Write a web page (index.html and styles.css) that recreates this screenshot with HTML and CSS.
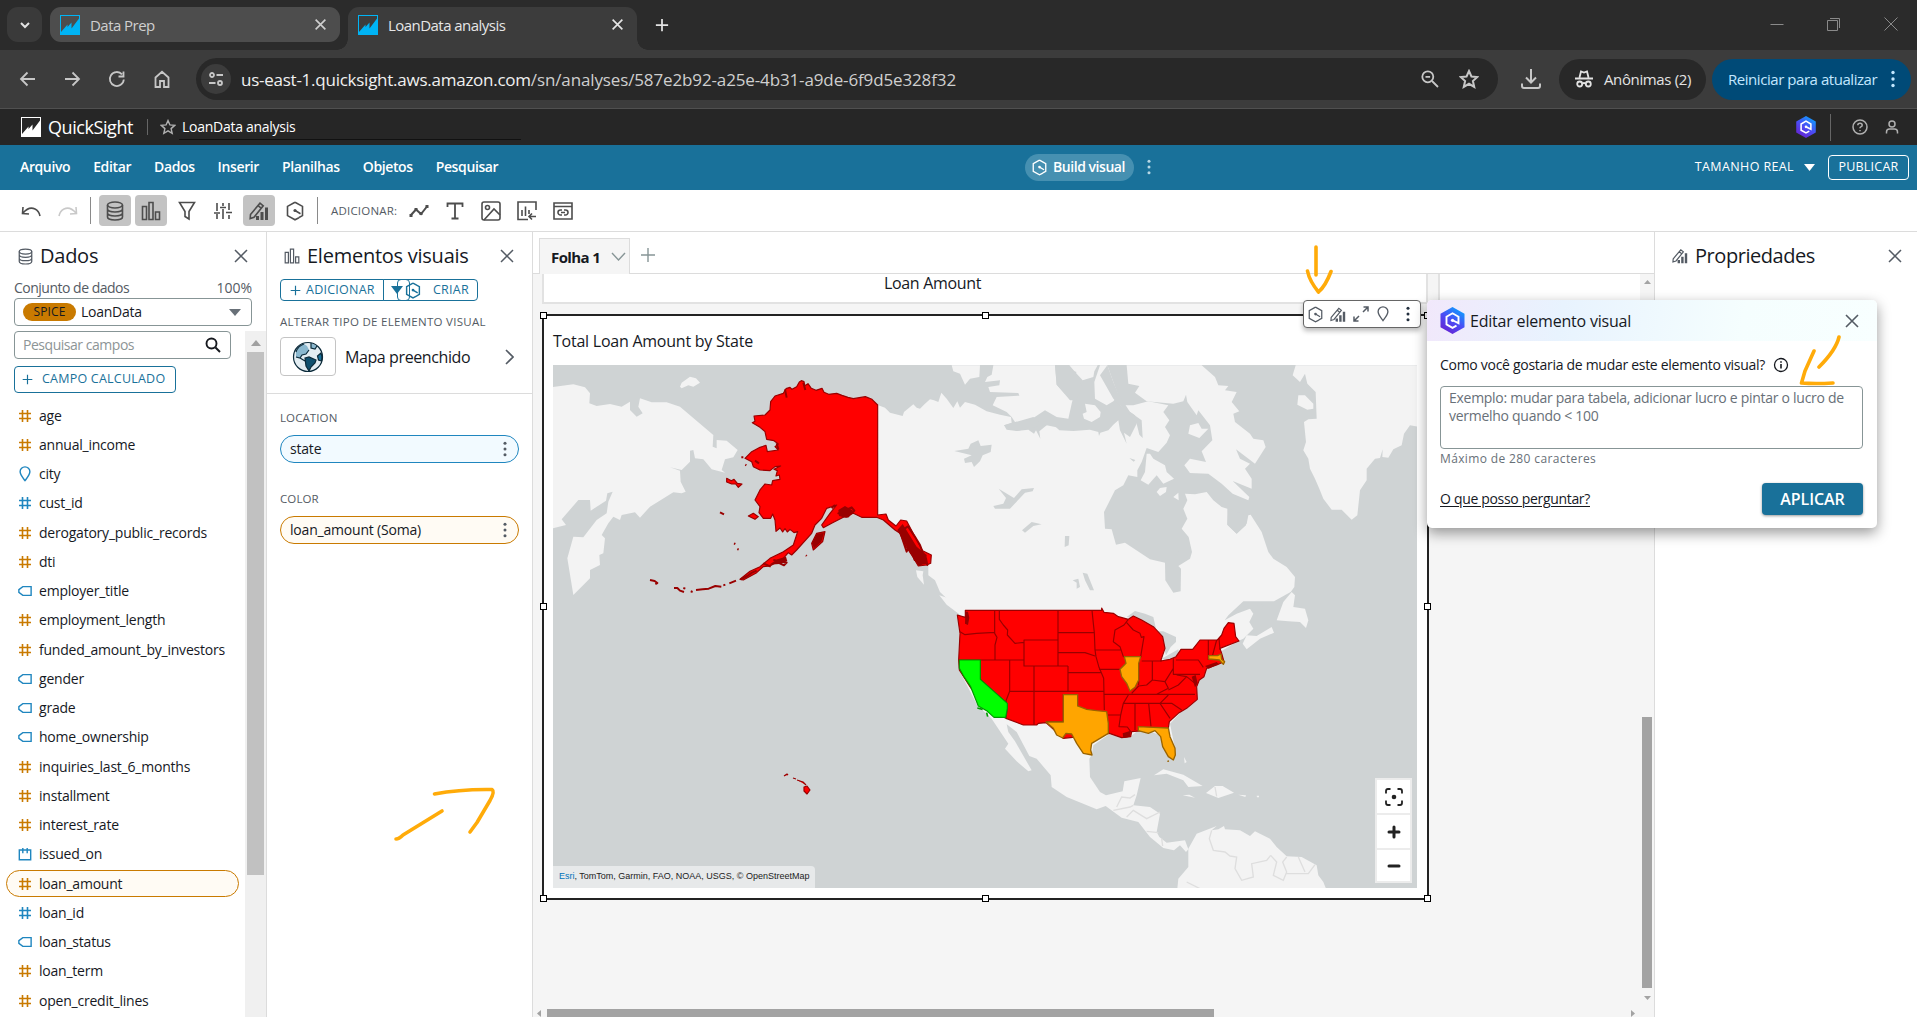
FILE: index.html
```html
<!DOCTYPE html>
<html lang="pt-BR">
<head>
<meta charset="utf-8">
<title>LoanData analysis</title>
<link rel="stylesheet" href="styles.css">
</head>
<body>
<svg class="defs" aria-hidden="true">
  <defs>
    <linearGradient id="qgrad" x1="0.8" y1="0" x2="0.2" y2="1"><stop offset="0" stop-color="#0aa5ff"/><stop offset=".5" stop-color="#4a4df5"/><stop offset="1" stop-color="#6a1fd0"/></linearGradient>
    <symbol id="x" viewBox="0 0 16 16"><path d="M2 2l12 12M14 2L2 14"/></symbol>
    <symbol id="plus" viewBox="0 0 16 16"><path d="M8 1v14M1 8h14"/></symbol>
    <symbol id="favicon" viewBox="0 0 20 20"><rect width="20" height="20" fill="currentColor"/><path class="cut" d="M1 1h18v2.500L11.500 13.500V7.500L7.500 12V9.500L1 17z"/></symbol>
    <symbol id="db" viewBox="0 0 18 20"><ellipse cx="9" cy="4" rx="7.500" ry="3"/><path d="M1.500 4v12c0 1.700 3.400 3 7.500 3s7.500-1.300 7.500-3V4M1.500 8c0 1.700 3.400 3 7.500 3s7.500-1.300 7.500-3M1.500 12c0 1.700 3.400 3 7.500 3s7.500-1.300 7.500-3"/></symbol>
    <symbol id="bars" viewBox="0 0 20 20"><path d="M1.500 5.500h4v13h-4zM8 1.500h4v17H8zM14.500 11h4v7.500h-4z"/></symbol>
    <symbol id="pencil" viewBox="0 0 20 20"><path d="M1.500 13.500L11 2.200l3.200 2.600L5 16.200 1.200 17.500zM9 4.600l3.200 2.600"/><path class="solid" d="M7 15h3v4H7zM11.500 11h3v8h-3zM16 6.500h3V19h-3z"/></symbol>
    <symbol id="hex" viewBox="0 0 18 20"><path d="M9 1.200l7.500 4.200v9.200L13 16.500M13 16.700L9 18.800l-7.500-4.200V5.400L9 1.200M9 9.500l5.500 3.200"/><circle class="solid" cx="9" cy="9.500" r="1.600"/></symbol>
    <symbol id="qlogo" viewBox="0 0 24 27"><path fill="url(#qgrad)" stroke="none" d="M12 0l12 6.700v13.600L12 27 0 20.300V6.700z"/><path d="M16 18.600L12 20.800l-6-3.400V9.800L12 6.300l6 3.500v6.400l-5.500-2.700" fill="none" stroke="#fff" stroke-width="1.900"/><circle cx="12" cy="13.300" r="1.600" fill="#fff"/></symbol>
    <symbol id="pin" viewBox="0 0 14 18"><path d="M7 16.500C4 12.500 1.500 9.500 1.500 6.500a5.500 5.500 0 0 1 11 0C12.500 9.500 10 12.500 7 16.500z"/></symbol>
    <symbol id="hash" viewBox="0 0 14 14"><path d="M4.500 1v12M9.500 1v12M1 4.500h12M1 9.500h12"/></symbol>
    <symbol id="tag" viewBox="0 0 16 12"><path d="M5.500 1H15v10H5.500L1 7.500v-3z"/></symbol>
    <symbol id="cal" viewBox="0 0 16 16"><path d="M1.500 3.500h13v11h-13zM5.500 1v6M10.500 1v6"/></symbol>
    <symbol id="dots" viewBox="0 0 4 18"><circle cx="2" cy="2.500" r="1.700"/><circle cx="2" cy="9" r="1.700"/><circle cx="2" cy="15.500" r="1.700"/></symbol>
    <symbol id="star" viewBox="0 0 18 18"><path d="M9 1.800l2.200 4.900 5.300.5-4 3.600 1.200 5.300L9 13.300l-4.700 2.800 1.200-5.300-4-3.600 5.300-.5z"/></symbol>
  </defs>
</svg>

<header class="tabs">
  <div class="tabs-menu"><svg class="ico" width="10" height="8" viewBox="0 0 10 8"><path stroke-width="2" d="M1 2l4 4 4-4"/></svg></div>
  <div class="tab"><svg class="fav" width="20" height="20"><use href="#favicon"/></svg><span>Data Prep</span><svg class="ico" width="13" height="13"><use href="#x"/></svg></div>
  <div class="tab active"><svg class="fav" width="20" height="20"><use href="#favicon"/></svg><span>LoanData analysis</span><svg class="ico" width="13" height="13"><use href="#x"/></svg></div>
  <svg class="ico newtab" width="14" height="14"><use href="#plus"/></svg>
  <div class="window-controls">
    <svg class="ico" width="14" height="14" viewBox="0 0 14 14"><path d="M.5 7.500h13"/></svg>
    <svg class="ico" width="14" height="14" viewBox="0 0 14 14"><path d="M.5 3.500h10v10H.500zM3 1.500h9.500V11"/></svg>
    <svg class="ico" width="14" height="14" viewBox="0 0 14 14"><path d="M.5.5l13 13M13.500.5l-13 13"/></svg>
  </div>
</header>

<div class="browserbar">
  <div class="navs">
    <svg class="ico" width="18" height="18" viewBox="0 0 18 18"><path d="M17 9H3M9.500 2.500L3 9l6.500 6.500"/></svg>
    <svg class="ico" width="18" height="18" viewBox="0 0 18 18"><path d="M2 9h13.500M9.500 2.500L16 9l-6.500 6.500"/></svg>
    <svg class="ico" width="18" height="18" viewBox="0 0 18 18"><path d="M15.800 9.500A7 7 0 1 1 14 4.300M15.500 1.500v5h-5"/></svg>
    <svg class="ico" width="18" height="18" viewBox="0 0 18 18"><path d="M2.500 7.500L9 1.800l6.500 5.700V17H11v-6H7v6H2.500z"/></svg>
  </div>
  <div class="omnibox">
    <span class="site"><svg class="ico" width="16" height="14" viewBox="0 0 16 14"><circle cx="4" cy="3" r="2"/><path d="M8.500 3H15M1 11h6.500"/><circle cx="12" cy="11" r="2"/></svg></span>
    <span class="url">us-east-1.quicksight.aws.amazon.com<i>/sn/analyses/587e2b92-a25e-4b31-a9de-6f9d5e328f32</i></span>
    <svg class="ico" width="18" height="18" viewBox="0 0 18 18"><circle cx="6.800" cy="6.800" r="5.500"/><path d="M11 11l6 6M4.500 6.800h4.600"/></svg>
    <svg class="ico" width="20" height="20"><use href="#star"/></svg>
  </div>
  <svg class="ico download" width="20" height="20" viewBox="0 0 20 20"><path stroke-width="2" d="M10 0v13M5 8.500l5 5 5-5M1 14.500V17q0 2 2 2h14q2 0 2-2v-2.500"/></svg>
  <div class="incognito"><svg class="ico" width="18" height="18" viewBox="0 0 18 18"><path d="M4.500 7.500L6 1.500l3 1 3-1 1.500 6M0 8.500h18M7.500 13.500q1.500-1 3 0"/><circle cx="4.700" cy="14" r="2.500"/><circle cx="13.300" cy="14" r="2.500"/></svg>Anônimas (2)</div>
  <div class="restart">Reiniciar para atualizar<svg width="4" height="18" fill="currentColor"><use href="#dots"/></svg></div>
</div>

<div class="apphead">
  <svg class="fav" width="20" height="20"><use href="#favicon"/></svg>
  <span class="brand">QuickSight</span>
  <i class="bsep"></i>
  <svg class="ico star" width="16" height="16"><use href="#star"/></svg>
  <span class="docname">LoanData analysis</span>
  <div class="headicons">
    <svg width="20" height="22"><use href="#qlogo"/></svg><i></i>
    <svg class="ico" width="16" height="16" viewBox="0 0 16 16"><circle cx="8" cy="8" r="7"/><path d="M5.800 6.300q0-2 2.200-2t2.200 1.900q0 1.200-1.400 1.700-.8.300-.8 1.300M8 11v1.300"/></svg>
    <svg class="ico" width="14" height="16" viewBox="0 0 14 16"><circle cx="7" cy="5" r="3"/><path d="M1.500 14.500v-1.500q0-3 3-3h5q3 0 3 3v1.500"/></svg>
  </div>
</div>

<nav class="menubar">
  <span>Arquivo</span><span>Editar</span><span>Dados</span><span>Inserir</span><span>Planilhas</span><span>Objetos</span><span>Pesquisar</span>
  <div class="build"><svg class="ico" width="15" height="17"><use href="#hex"/></svg>Build visual</div>
  <svg class="bdots" width="4" height="16" fill="#b9d8e5"><use href="#dots"/></svg>
  <div class="zoomsel">TAMANHO REAL<svg width="11" height="7"><path d="M0 0h11L5.500 7z" fill="#fff"/></svg></div>
  <div class="publish">PUBLICAR</div>
</nav>

<div class="toolbar">
  <svg class="ico" width="20" height="16" viewBox="0 0 20 16"><path d="M2 4l-.5 6.500 6.500.5M2 10Q8 3 14 6q4 2 5 7"/></svg>
  <svg class="ico dim" width="20" height="16" viewBox="0 0 20 16"><path d="M18 4l.5 6.500-6.500.5M18 10Q12 3 6 6q-4 2-5 7"/></svg>
  <i class="sep"></i>
  <span class="tb on"><svg class="ico" width="18" height="20"><use href="#db"/></svg></span>
  <span class="tb on"><svg class="ico" width="20" height="20"><use href="#bars"/></svg></span>
  <span class="tb"><svg class="ico" width="18" height="20" viewBox="0 0 18 20"><path d="M1.500 1.500h15l-5.500 9V18l-4-2.500v-5z"/></svg></span>
  <span class="tb"><svg class="ico" width="20" height="18" viewBox="0 0 20 18"><path d="M4 1v8M4 12v5M10 1v3M10 7v10M16 1v7M16 13v4M1 11h6M7 5.500h6M13 10.500h6"/></svg></span>
  <span class="tb on"><svg class="ico" width="20" height="20"><use href="#pencil"/></svg></span>
  <span class="tb"><svg class="ico" width="18" height="20"><use href="#hex"/></svg></span>
  <i class="sep"></i>
  <span class="addlabel">ADICIONAR:</span>
  <span class="tb"><svg class="ico" width="20" height="14" viewBox="0 0 20 14"><path stroke-width="2" d="M2 11l5-5.500 5 4.500 6-7.500"/><path class="solid" d="M.5 10h3v3h-3zM5.500 4h3v3h-3zM10.500 8h3v3h-3zM16.500 1h3v3h-3z"/></svg></span>
  <span class="tb"><svg class="ico" width="18" height="18" viewBox="0 0 18 18"><path stroke-width="1.800" d="M1.500 5V1.500h15V5M9 1.500v15M5.500 16.500h7"/></svg></span>
  <span class="tb"><svg class="ico" width="20" height="20" viewBox="0 0 20 20"><rect x="1" y="1" width="18" height="18" rx="2"/><circle cx="6.500" cy="6.500" r="2"/><path d="M3 19l10-11 6 6"/></svg></span>
  <span class="tb"><svg class="ico" width="20" height="20" viewBox="0 0 20 20"><path d="M11 18.500H1V1h18v8M5 9v6M8.500 5.500V15M12 9v4M19 15.500h-6.500M15 12.500l-3 3 3 3"/></svg></span>
  <span class="tb"><svg class="ico" width="20" height="18" viewBox="0 0 20 18"><path d="M1 1h18v16H1zM1 4.500h18M9 8H7.500a2.500 2.500 0 0 0 0 5H9M11 8h1.500a2.500 2.500 0 0 1 0 5H11M8 10.500h4"/></svg></span>
</div>

<main class="work">
  <section class="data">
    <div class="ptitle"><svg class="ico" width="15" height="17"><use href="#db"/></svg><h2>Dados</h2><svg class="ico" width="16" height="16"><use href="#x"/></svg></div>
    <div class="dsrow"><span>Conjunto de dados</span><span class="pct">100%</span></div>
    <div class="dssel"><b>SPICE</b><span>LoanData</span><svg width="12" height="7"><path d="M0 0h12L6 7z" fill="#687078"/></svg></div>
    <div class="scrollwrap">
      <div class="fields">
        <div class="search">Pesquisar campos<svg class="ico" width="16" height="16" viewBox="0 0 16 16"><circle cx="6.500" cy="6.500" r="5"/><path d="M10.500 10.500l4.500 4.500"/></svg></div>
        <div class="calc"><svg class="ico" width="11" height="11"><use href="#plus"/></svg>CAMPO CALCULADO</div>
        <ul>
          <li class="m"><svg><use href="#hash"/></svg>age</li>
          <li class="m"><svg><use href="#hash"/></svg>annual_income</li>
          <li class="d"><svg class="pinico"><use href="#pin"/></svg>city</li>
          <li class="d"><svg><use href="#hash"/></svg>cust_id</li>
          <li class="m"><svg><use href="#hash"/></svg>derogatory_public_records</li>
          <li class="m"><svg><use href="#hash"/></svg>dti</li>
          <li class="d"><svg><use href="#tag"/></svg>employer_title</li>
          <li class="m"><svg><use href="#hash"/></svg>employment_length</li>
          <li class="m"><svg><use href="#hash"/></svg>funded_amount_by_investors</li>
          <li class="d"><svg><use href="#tag"/></svg>gender</li>
          <li class="d"><svg><use href="#tag"/></svg>grade</li>
          <li class="d"><svg><use href="#tag"/></svg>home_ownership</li>
          <li class="m"><svg><use href="#hash"/></svg>inquiries_last_6_months</li>
          <li class="m"><svg><use href="#hash"/></svg>installment</li>
          <li class="m"><svg><use href="#hash"/></svg>interest_rate</li>
          <li class="d"><svg><use href="#cal"/></svg>issued_on</li>
          <li class="m sel"><svg><use href="#hash"/></svg>loan_amount</li>
          <li class="d"><svg><use href="#hash"/></svg>loan_id</li>
          <li class="d"><svg><use href="#tag"/></svg>loan_status</li>
          <li class="m"><svg><use href="#hash"/></svg>loan_term</li>
          <li class="m"><svg><use href="#hash"/></svg>open_credit_lines</li>
        </ul>
      </div>
      <div class="vbar"><svg width="10" height="6"><path d="M0 6h10L5 0z" fill="#a0a0a0"/></svg><div></div></div>
    </div>
  </section>

  <section class="visuals">
    <div class="ptitle"><svg class="ico" width="16" height="16"><use href="#bars"/></svg><h2>Elementos visuais</h2><svg class="ico" width="16" height="16"><use href="#x"/></svg></div>
    <div class="addrow">
      <div class="add"><svg class="ico" width="11" height="11"><use href="#plus"/></svg>ADICIONAR</div>
      <div class="drop"><svg width="12" height="8"><path d="M0 0h12L6 8z" fill="#19719a"/></svg></div>
      <div class="criar"><svg class="ico" width="16" height="17"><use href="#hex"/></svg>CRIAR</div>
    </div>
    <div class="cap">ALTERAR TIPO DE ELEMENTO VISUAL</div>
    <div class="vtype">
      <div class="thumb"><svg width="32" height="32" viewBox="0 0 32 32"><circle cx="16" cy="16" r="14.500" fill="#e3edf2"/><path fill="#8ab8cf" d="M12 3Q6 5 4 11l0 5 4 1 2-3 4-1 3-4-2-4zM19 2l6 3-2 3-4-1z"/><path fill="#10506e" d="M13 17l4-1 7 3-1 3-4 4-2 4-3-5z"/><path fill="#19719a" d="M29 12q2 4 .5 8l-3-1-1-4z"/><path class="g" d="M12 3Q6 5 4 11M13 17l4-1 7 3-1 3-4 4-2 4-3-5zM4 16l4 1 2-3 4-1 3-4M8 17l5 3M29 12q2 4 .5 8l-3-1-1-4zM19 2l0 5 4 1 2-3"/><circle class="g" cx="16" cy="16" r="14.500"/></svg></div>
      <span>Mapa preenchido</span>
      <svg class="ico" width="9" height="16" viewBox="0 0 9 16"><path d="M1 1l7 7-7 7"/></svg>
    </div>
    <div class="wells">
      <div class="cap">LOCATION</div>
      <div class="pill blue">state<svg width="4" height="16" fill="#545b64"><use href="#dots"/></svg></div>
      <div class="cap">COLOR</div>
      <div class="pill orange">loan_amount (Soma)<svg width="4" height="16" fill="#545b64"><use href="#dots"/></svg></div>
    </div>
  </section>

  <section class="sheet">
    <div class="sheettabs">
      <div class="sheettab">Folha 1<svg class="ico" width="15" height="9" viewBox="0 0 15 9"><path d="M1 1l6.500 7L14 1"/></svg></div>
      <svg class="ico" width="16" height="16"><use href="#plus"/></svg>
    </div>
    <div class="canvas">
      <div class="board">
        <div class="toprow"><div class="card">Loan Amount</div><div class="card2"></div></div>
        <div class="visual">
          <i class="h tl"></i><i class="h tc"></i><i class="h tr"></i><i class="h ml"></i><i class="h mr"></i><i class="h bl"></i><i class="h bc"></i><i class="h br"></i>
          <div class="vtitle">Total Loan Amount by State</div>
          <div class="mapbox">
            <svg class="map" width="864" height="523" viewBox="553 365 864 523">
              <g transform="translate(900 362) scale(.33333)" class="land">
                <path d="M-67 129L-45 137-30 152 8 162 12 150 40 127 50 137 60 140 75 125 90 112 102 115 115 120 124 92 140 110 160 138 172 118 180 137 195 120 225 128 260 148 300 158 333 165 335 182 312 190 320 203 350 207 385 203 402 215 408 205 421 230 418 208 440 190 455 183 478 205 520 207 570 203 595 210 597 222 601 212 625 205 640 188 655 175 660 205 680 245 672 212 690 225 710 185 705 160 660 130 700 130 745 118 805 130 790 150 808 175 795 195 810 220 800 242 775 270 740 258 725 300 712 325 712 345 685 340 670 370 645 385 612 450 615 500 635 502 648 548 675 542 750 592 795 602 796 655 820 692 842 688 843 620 835 612 870 590 876 570 866 525 845 500 862 470 850 440 862 415 855 395 885 397 920 390 940 415 965 435 982 440 982 488 1010 515 1040 485 1045 460 1052 458 1085 510 1105 570 1120 590 1160 615 1185 645 1183 675 1172 690 1122 718 1030 718 985 760 974 775 1010 755 1050 740 1060 755 1048 780 1060 800 1030 830 1016 836 960 870 955 900 915 910 880 1010 810 1085 825 1160 800 1170 785 1120 720 1100 690 1125 625 1118 580 1150 575 1180 568 1190 570 1245 600 1290 618 1300 668 1288 673 1258 722 1248 710 1300 700 1330 750 1335 780 1355 770 1410 778 1425 800 1442 855 1435 865 1462 858 1470 840 1450 822 1465 790 1458 750 1425 715 1380 665 1367 617 1332 590 1342 500 1305 455 1275 452 1240 410 1190 388 1182 350 1110 320 1087 325 1110 345 1138 395 1225 385 1228 350 1198 315 1160 325 1145 275 1070 232 1030 180 930 176 760 195 745 170 738 120 690 105 655 85 640 85 610 0 500-67 460z"/>
                <path d="M155 10L160 28 180 35 195 68 210 50 238 45 240 10zM280 10L275 38 262 45 255 60 300 55 298 70 265 75 270 90 355 93 358 101 290 105 278 130 320 150 335 165 345 180 385 178 435 145 470 165 505 170 515 125 520 105 495 95 470 68 465 10zM548 155L560 150 555 125 585 130 602 150 600 165 575 180 552 170zM508 10L530 35 548 55 580 45 583 28 593 10zM600 10L583 60 585 110 620 130 640 118 655 100 640 60 622 10zM680 10L685 65 718 72 705 92 740 118 820 125 850 118 858 98 862 120 890 160 895 145 930 190 937 235 905 268 918 300 870 290 853 310 870 333 925 335 965 365 998 395 1045 415 1048 405 998 357 1055 380 1055 350 1035 320 1050 305 1020 290 1008 262 1065 305 1097 255 1090 235 1060 230 1050 215 1005 180 1000 155 1018 148 995 120 1010 90 975 85 985 72 955 70 945 45 905 10zM740 275L735 330 722 355 745 368 770 340 790 365 822 350 800 330 795 310 760 290 750 275zM770 390L780 378 800 375 798 390 780 402zM820 405L835 392 836 415zM865 215L870 190 895 183 905 200 925 200 898 228z"/>
                <path d="M1187 10L1178 40 1200 60 1215 35 1222 65 1247 90 1250 170 1225 172 1212 180 1218 240 1210 265 1225 290 1230 320 1245 350 1258 380 1270 410 1295 443 1325 443 1355 473 1372 460 1380 385 1400 355 1400 320 1425 290 1440 288 1448 262 1447 285 1465 287 1480 262 1505 250 1512 215 1530 190 1560 195V10zM1192 128L1195 100 1215 100 1240 125 1240 140 1222 143z"/>
                <path d="M1130 775L1150 720 1175 690 1185 700 1180 735 1215 740 1225 775 1218 798 1200 780 1165 778zM1028 845L1040 820 1070 822 1115 795 1122 812 1080 830 1040 862zM762 1240L790 1222 850 1238 908 1272 865 1275 850 1255 800 1235zM918 1293L945 1272 968 1272 1002 1292 955 1308zM848 1300L868 1298 885 1307zM1015 1298l23 2-2 5zM118 700L155 712 200 748 185 762 140 728zM48 625L70 628 68 640 72 668 52 645zM852 1185l8 15-6 4zM1070 1301h7v5h-6z"/>
                <path d="M865 1460L890 1415 950 1392 935 1405 955 1402 972 1392 975 1402 1020 1405 1050 1422 1065 1408 1110 1430 1130 1455 1160 1483 1205 1485 1250 1510 1255 1540 1270 1560 1278 1580H832L835 1550 865 1515z"/>
                <path class="border" d="M935 1405L928 1430 940 1465 975 1470 990 1482 1010 1485 1005 1520 1025 1555 1060 1545 1055 1505 1100 1495 1112 1480M1112 1480L1130 1500 1120 1540 1150 1555 1160 1530 1148 1500 1160 1485M1160 1535L1225 1535 1245 1508M1195 1485L1215 1530M860 1560L900 1580M650 1335L665 1305 690 1308 705 1298M640 1345L690 1335 700 1330M680 1365L700 1345 740 1370 780 1350M740 1408L775 1412M785 1430l3 22M945 1275l5 28"/>
                <path class="water" d="M163 267L205 260 212 245 235 235 242 252 275 248 272 270 248 280 240 298 222 315 215 300 195 303 192 290 215 280zM280 432L310 425 318 408 296 380 342 408 365 382 402 378 398 388 375 392 330 440 285 440zM366 505L395 480 425 487 400 492 375 512zM495 522l13 0-2 28-12 5zM548 632L562 635 582 685 570 685 555 655zM518 655L535 650 540 675 530 680 530 662zM680 765L705 747 735 755 760 765 768 800 725 775zM768 808L790 808 828 825 828 840 812 855 798 880 785 835zM785 890L835 862 838 885 800 895zM1028 735L1090 728 1085 745 1045 738zM820 585L842 565 840 572 825 588zM688 288l18 6-5 5z"/>
                <path class="water" d="M465 10L530 30 505 60 540 60 548 75 528 115 510 115 470 68zM600 40L622 10 640 60 655 95 690 150 725 175 728 228 718 218 710 185 680 150 640 110zM985 440L1040 460 1038 490 1010 515 982 488zM312 190L400 165 420 180 455 178 480 198 440 190 405 195 350 207z"/>
              </g>
              <g transform="translate(530 230) scale(.33333)">
                <path class="land" d="M60 472L130 463 165 472 180 490 178 520 200 528 240 522 275 530 300 515 300 540 320 560 338 550 325 530 330 505 365 517 410 517 450 530 550 615 548 650 560 655 560 630 590 632 623 660 610 682 585 688 575 720 585 728 545 718 520 688 495 685 490 660 480 662 480 695 455 720 420 712 450 722 452 755 467 785 455 790 430 787 360 830 330 863 315 847 275 855 270 870 250 860 235 880 215 915 225 925 220 970 208 975 210 1005 180 1020 180 1045 160 1065 130 1095 112 985 130 920 160 922 200 870 230 850 235 815 248 785 232 790 228 812 182 842 180 810 145 810 95 868 108 885 60 897zM450 470L455 458 480 440 498 445 510 458 490 470 475 466 455 475z"/>
                <path class="st red" d="M808 456l6-4 8 3 2 12 10-6 10 14 14 6 18-6 6 12 14 6 24-3 16 6 18 6 16 4 36-6 20 8 17 17V855L1068 852 1075 870 1098 888 1112 870 1130 873 1160 930 1178 962 1204 975 1202 1000 1190 1005 1165 1008 1145 975 1125 945 1110 910 1095 900 1060 870 1040 862 995 862 970 850 940 862 905 880 880 893 875 885 900 850 920 825 890 835 875 865 855 885 845 910 800 960 785 975 775 968 760 985 720 1008 700 1010 680 1028 640 1050 630 1048 660 1024 690 1010 720 985 760 965 790 945 803 905 792 908 780 898 772 906 765 896 758 906 750 894 738 904 735 870 728 852 722 865 700 865 687 848 690 830 675 810 690 780 705 762 725 765 728 752 750 748 748 735 738 738 742 722 732 718 752 708 735 710 720 722 690 720 670 710 665 695 645 685 665 665 690 652 708 646 712 665 745 660 735 650 745 642 732 632 710 628 705 605 690 592 667 578 675 574 672 558 705 555 720 540 722 515 735 498 760 490 768 476 780 472 786 478 800 470z"/>
                <path class="st red" d="M590 745l14 7 8-4 10 12 14 2-11 10-8-10-12 0-15-6zM655 858L670 850 685 860 675 868zM845 940L860 910 885 905 878 935 850 960z"/>
                <path class="isle" d="M570 847l12 6M612 940l4 2M622 957l4 2M634 682l6 0M646 704l3 2M828 976l2 2M360 1050l14 3 8 6-6 3M432 1074l10 0 8 8 12 4M460 1074l6 2M484 1088l2-6M498 1080l20-2 18-2 20-8 18 2M580 1066l6-2M598 1060l20-8M632 1048l20-10 14-10 14-6M730 990l40 8-8 8-20-10M700 1000l22 10M765 478l5 25M820 458l6 22M740 640l5 18M675 692l12 8M905 835l10-10M925 850l40-18 8 10-20 18-18-8zM1110 905l20 60 10-25 14 50 10-30 6 45 18-20 4 20-22-60-16-26-20-30z"/>
                <path class="dense" d="M1102 900L1118 882 1160 950 1190 975 1188 1002 1165 1006 1140 968zM846 940L860 912 882 908 874 935 852 955zM718 1004l24-16 26-8 4 14-24 8zM925 840l20-12 24 14-20 22-22-6z"/>
              </g>
              <g class="st red"><path d="M784 776l3-2 1 1M793 778l3 1M797 780l6 2 3 3M804 787l3-1 3 4-3 4-3-3z"/></g>
              <g transform="translate(920 580) scale(.33333)">
                <path class="st red" d="M136 91H545V84L552 97 580 100 595 110 625 118 640 108 665 120 700 140 728 170 735 205 722 243 750 238 768 230 783 208 818 208 840 180 892 180 905 165 912 145 925 128 942 130 947 170 957 183 900 205 905 220 912 245 890 255 860 265 852 290 838 300 830 320 832 358 800 385 775 400 748 425 745 445 635 455 632 470 605 473 568 460 430 475 378 428 355 430 350 435H310L258 415 200 390 150 320 118 270 116 240 120 160 112 105 136 112z"/>
                <path class="st lines" d="M120 155L135 164 170 160 225 157M224 91V160L231 172 225 195V240M238 91V118L250 135 263 150 262 165 285 190 312 187M312 240V180H414M312 180V258H444M414 91V258M414 158H523M414 218H495L525 228M516 91L520 130 523 158 525 210H603M625 118L612 135 585 150 580 185 600 200 610 230H665M525 210L528 230 537 262 551 295 553 390M537 268H603M620 128L640 150 660 160 664 172 672 170 662 230M444 278H542M444 258V334M117 240H312M181 240V298L262 370M269 240V334L258 362 262 385 258 415M269 334H553M342 258V434M430 342V425H378M553 343H630M563 405H602M625 345L610 370 602 405 597 440 622 441 632 455M645 370V450M686 370L693 440M620 343H825M610 370H720L745 345M656 245V315M697 243V300M665 243H700M725 243L697 243M760 235V283H840M760 265L735 305 697 300 680 315 656 318 635 340M768 240H835L850 262M735 305L745 325 710 343M745 330L775 315 800 290 770 285M720 370L755 370 785 390M720 370L750 415M865 180V240M890 180L878 225M897 175L900 210M800 290L825 310"/>
                <path class="dense" d="M136 95l8 0 4 18-4 22-9-4zM815 290l12-5 6 25-8 12zM855 258l35-12 6 6-30 14zM608 460l24-8-2 18-20 4z"/>
                <path class="st green" d="M118 240H181V298L262 370 262 385 257 412 222 412 200 392 175 378 152 320 132 290 118 265z"/>
                <path class="greenisle" d="M172 384l16 4M200 398l3 12"/>
                <path class="st gold" d="M430 344H473V378L500 388 530 392 560 395 565 430 565 460 540 475 515 490 512 510 516 525 490 520 470 490 455 462 438 460 428 474 410 465 400 445 378 426H430zM613 230H662L656 250V300L645 322 630 333 620 310 605 290 600 268 618 250zM655 440L745 444 750 470 765 505 766 525 760 540 745 530 728 500 722 470 705 452 685 460 655 452zM866 227H892L903 222 905 238 914 245 910 253 898 240 866 237zM742 544l5-1"/>
              </g>
            </svg>
            <div class="attrib"><a>Esri</a>, TomTom, Garmin, FAO, NOAA, USGS, © OpenStreetMap</div>
            <div class="mapctl">
              <span><svg class="ico" width="18" height="18" viewBox="0 0 18 18"><path stroke-width="1.800" d="M1 5.500V3q0-2 2-2h2.500M12.500 1H15q2 0 2 2v2.500M17 12.500V15q0 2-2 2h-2.500M5.500 17H3q-2 0-2-2v-2.500"/><circle class="solid" cx="9" cy="9" r="2.300"/></svg></span>
              <span><svg class="ico" width="14" height="14" viewBox="0 0 14 14"><path stroke-width="3" stroke-linecap="round" d="M7 2v10M2 7h10"/></svg></span>
              <span><svg class="ico" width="14" height="14" viewBox="0 0 14 14"><path stroke-width="3" stroke-linecap="round" d="M2 7h10"/></svg></span>
            </div>
          </div>
          <div class="vtools">
            <svg class="ico" width="15" height="17"><use href="#hex"/></svg>
            <svg class="ico" width="16" height="17"><use href="#pencil"/></svg>
            <svg class="ico" width="16" height="16" viewBox="0 0 16 16"><path d="M10 6l5-5M10.500 1H15v4.500M6 10l-5 5M1 10.500V15h4.500"/></svg>
            <svg class="ico" width="14" height="16"><use href="#pin"/></svg>
            <svg class="more" width="4" height="16" fill="#232f3e"><use href="#dots"/></svg>
          </div>
        </div>
      </div>
      <div class="cvbar"><svg width="7" height="4"><path d="M0 4h7L3.500 0z"/></svg><div></div><svg width="7" height="4"><path d="M0 0h7L3.500 4z"/></svg></div>
      <div class="chbar"><svg width="4" height="7"><path d="M4 0v7L0 3.500z"/></svg><div></div><svg width="4" height="7"><path d="M0 0v7l4-3.500z"/></svg></div>
    </div>
  </section>

  <section class="props">
    <div class="ptitle"><svg class="ico" width="16" height="16"><use href="#pencil"/></svg><h2>Propriedades</h2><svg class="ico" width="16" height="16"><use href="#x"/></svg></div>
  </section>
</main>

<aside class="dialog">
  <div class="dhead"><svg width="25" height="27"><use href="#qlogo"/></svg><span>Editar elemento visual</span><svg class="ico" width="16" height="16"><use href="#x"/></svg></div>
  <div class="question"><span>Como você gostaria de mudar este elemento visual?</span><svg class="ico" width="16" height="16" viewBox="0 0 16 16"><circle cx="8" cy="8" r="6.500" stroke-width="1.300"/><path stroke-width="1.600" d="M8 7v4.500M8 4.300v1.500"/></svg></div>
  <div class="area">Exemplo: mudar para tabela, adicionar lucro e pintar o lucro de<br>vermelho quando &lt; 100</div>
  <div class="max">Máximo de 280 caracteres</div>
  <div class="dfoot"><u>O que posso perguntar?</u><div class="apply">APLICAR</div></div>
</aside>

<svg class="ink" width="1917" height="1017" viewBox="0 0 1917 1017">
  <path d="M1316 247v28M1307.500 271q2 10 11 21 7-6 12.500-20.500M1839 337Q1836 350 1819 367M1814 351l-9 20-3.500 12Q1815 384 1833 383"/>
  <path d="M396 839q3 0 7-4l39-24M434.500 794Q460 789 492 789.500q3 2-2 11l-13 22-7 9.500"/>
</svg>
</body>
</html>
```
FILE: styles.css
```css
* { box-sizing: border-box; }
body { margin: 0; width: 1917px; height: 1017px; overflow: hidden; position: relative; display: flex; flex-direction: column; background: #fff; color: #16191f; font: 500 14px/18px "Open Sans", "Noto Sans", sans-serif; letter-spacing: -.27px; white-space: nowrap; }
svg { display: block; flex: none; }
.defs { position: absolute; width: 0; height: 0; }
.ico { fill: none; stroke: currentColor; stroke-width: 1.6; }
.solid { fill: currentColor; stroke: none; }
.cut { fill: var(--cut, #3c3c3c); }
h2 { margin: 0; font-size: 20px; line-height: 26px; font-weight: 500; }
ul { margin: 0; padding: 0; list-style: none; }

.tabs { height: 50px; background: #2b2b2b; display: flex; align-items: flex-start; padding: 7px 19px 0 7px; color: #e3e3e3; flex: none; font: 400 15px/20px "Open Sans", sans-serif; letter-spacing: -.54px; }
.tabs-menu { width: 35px; height: 35px; border-radius: 11px; background: #3a3a3a; display: flex; align-items: center; justify-content: center; margin-right: 8px; }
.tab { height: 35px; width: 290px; border-radius: 11px; background: #4d4d4d; display: flex; align-items: center; padding: 0 13px 0 10px; gap: 10px; --cut: #4d4d4d; color: #cfcfcf; }
.tab span { flex: 1; }
.tab .ico, .newtab { stroke-width: 2; }
.tab .fav { color: #00b4f5; }
.tab.active { height: 43px; width: 289px; margin-left: 8px; padding-bottom: 8px; border-radius: 11px 11px 0 0; background: #3c3c3c; position: relative; --cut: #3c3c3c; color: #e6e6e6; }
.tab.active::before, .tab.active::after { content: ""; position: absolute; bottom: 0; width: 11px; height: 11px; }
.tab.active::before { right: 100%; background: radial-gradient(circle at 0 0, #2b2b2b 10.5px, #3c3c3c 11px); }
.tab.active::after { left: 100%; background: radial-gradient(circle at 100% 0, #2b2b2b 10.5px, #3c3c3c 11px); }
.newtab { margin: 11px 0 0 18px; }
.window-controls { margin: 10px 0 0 auto; display: flex; gap: 43px; color: #8a8a8a; }
.window-controls .ico { stroke-width: 1; }

.browserbar { height: 59px; flex: none; background: #3c3c3c; border-bottom: 1px solid #505050; display: flex; align-items: center; color: #c7c7c7; padding: 0 6px 0 18px; font: 400 15px/20px "Open Sans", sans-serif; letter-spacing: -.45px; }
.browserbar .ico { stroke-width: 1.8; }
.navs { display: flex; gap: 27px; width: 178px; }
.omnibox { width: 1302px; height: 42px; border-radius: 21px; background: #282828; display: flex; align-items: center; padding: 0 19px 0 5px; }
.omnibox > .ico + .ico { margin-left: 20px; }
.site { width: 30px; height: 30px; border-radius: 50%; background: #3c3c3c; display: grid; place-items: center; margin-right: 10px; }
.url { flex: 1; font-size: 17px; letter-spacing: -.25px; color: #f0f0f0; padding-top: 1px; }
.url i { font-style: normal; color: #cfcfcf; letter-spacing: -.13px; }
.download { margin: 0 18px 0 23px; }
.incognito { width: 147px; height: 41px; border-radius: 21px; background: #282828; color: #e3e3e3; display: flex; align-items: center; gap: 11px; padding-left: 16px; letter-spacing: -.37px; }
.restart { width: 199px; height: 41px; border-radius: 21px; background: #004a77; color: #c2e7ff; margin-left: 6px; display: flex; align-items: center; gap: 14px; padding-left: 16px; }

.apphead { height: 36px; flex: none; background: #262626; color: #fff; display: flex; align-items: center; padding: 0 18px 0 21px; --cut: #262626; }
.brand { font-size: 18px; font-weight: 400; letter-spacing: -.43px; width: 106px; padding-left: 7px; }
.bsep { width: 1px; height: 16px; background: #666; margin-right: 12px; }
.star { color: #b0b0b0; margin-right: 3px; }
.docname { width: 342px; height: 25px; padding: 3px 3px 0; border-bottom: 1px solid #111; }
.headicons { margin-left: auto; display: flex; align-items: center; color: #b0b0b0; }
.headicons i { width: 1px; height: 27px; background: #666; margin: 0 21px 0 14px; }
.headicons .ico { stroke-width: 1.5; }
.headicons .ico + .ico { margin-left: 17px; }

.menubar { height: 45px; flex: none; background: #19719a; color: #fff; font-weight: 600; display: flex; align-items: center; padding: 0 8px 1px 20px; letter-spacing: -.38px; }
.menubar > span { margin-right: 23px; }
.build { position: absolute; left: 1025px; width: 109px; height: 27px; border-radius: 14px; background: #4690b1; display: flex; align-items: center; gap: 6px; padding-left: 7px; letter-spacing: -.45px; }
.bdots { position: absolute; left: 1147px; }
.zoomsel { margin-left: auto; display: flex; align-items: center; gap: 10px; font-size: 12.5px; font-weight: 500; letter-spacing: .38px; margin-right: 13px; }
.publish { width: 81px; height: 25px; border: 1px solid #fff; border-radius: 4px; font-size: 12.5px; font-weight: 500; letter-spacing: .22px; display: grid; place-items: center; }

.toolbar { height: 42px; flex: none; border-bottom: 1px solid #dcdcdc; display: flex; align-items: center; padding-left: 21px; color: #4d4d4d; }
.toolbar > .ico + .ico { margin-left: 17px; }
.dim { color: #c9c9c9; }
.sep { width: 1px; height: 27px; background: #8a8a8a; margin: 0 8px 0 12px; }
.tb { width: 32px; height: 31px; border-radius: 4px; display: grid; place-items: center; margin-right: 4px; }
.tb.on { background: #c3c3c3; }
.tb + .sep { margin: 0 13px 0 2px; }
.addlabel { font-size: 11.5px; font-weight: 400; color: #545b64; width: 72px; letter-spacing: .2px; }

.work { flex: 1; display: flex; min-height: 0; }
.ptitle { display: flex; align-items: center; gap: 7px; color: #545b64; height: 48px; letter-spacing: -.25px; }
.ptitle .ico { stroke-width: 1.5; }
.ptitle h2 { flex: 1; color: #16191f; }
.data { width: 267px; border-right: 1px solid #dcdcdc; display: flex; flex-direction: column; }
.data .ptitle { padding: 0 17px 0 18px; }
.dsrow { display: flex; justify-content: space-between; padding: 0 14px 2px; color: #545b64; font-weight: 400; letter-spacing: -.5px; height: 17px; align-items: center; }
.pct { letter-spacing: 0; }
.dssel { margin: 1px 14px 0; height: 28px; border: 1px solid #879596; border-radius: 4px; display: flex; align-items: center; padding: 0 10px 0 8px; flex: none; }
.dssel b { width: 53px; height: 18px; border-radius: 9px; background: #c97a00; font-size: 12px; font-weight: 500; letter-spacing: .1px; text-align: center; margin-right: 5px; line-height: 17px; }
.dssel span { flex: 1; }
.scrollwrap { flex: 1; min-height: 0; margin-top: 5px; display: flex; }
.fields { flex: 1; overflow: hidden; }
.search { margin: 0 14px 7px; height: 28px; width: 217px; border: 1px solid #879596; border-radius: 4px; display: flex; align-items: center; justify-content: space-between; padding: 0 9px 0 8px; color: #8d9596; font-weight: 400; letter-spacing: -.47px; }
.search .ico { color: #16191f; stroke-width: 1.9; }
.calc { margin-left: 14px; width: 162px; height: 27px; border: 1px solid #19719a; border-radius: 4px; color: #19719a; font-size: 12.500px; letter-spacing: .22px; display: flex; align-items: center; gap: 9px; padding: 0 0 1px 7px; margin-bottom: 8px; }
.fields li { height: 29.25px; display: flex; align-items: center; padding-left: 18px; letter-spacing: -.22px; }
.fields li svg { width: 14px; height: 14px; margin-right: 7px; fill: none; stroke: #c97a00; stroke-width: 1.6; }
.fields li .pinico { height: 16px; }
.fields li.d svg { stroke: #1f86bf; }
.fields li.sel { height: 27.25px; margin: 1px 6px; padding-left: 11px; border: 1px solid #c97a00; border-radius: 14px; background: #fffbf4; }
.vbar { width: 21px; background: #f0f0f0; display: flex; flex-direction: column; align-items: center; padding-top: 9px; }
.vbar div { width: 17px; height: 523px; margin-top: 6px; background: #c1c1c1; }

.visuals { width: 266px; border-right: 1px solid #dcdcdc; }
.visuals .ptitle { padding: 0 17px 0 17px; height: 47px; }
.addrow { display: flex; margin-left: 13px; color: #19719a; font-size: 12.500px; letter-spacing: .25px; height: 22px; }
.addrow .ico, .calc .ico { stroke-width: 1.7; }
.addrow > div { border: 1px solid #19719a; display: flex; align-items: center; }
.add { width: 104px; border-radius: 4px 0 0 4px; gap: 5px; padding-left: 9px; }
.drop { width: 27px; margin-left: -1px; border-radius: 0 4px 4px 0; padding-left: 7px; }
.criar { width: 81px; margin-left: -13px; border-radius: 4px; gap: 12px; padding-left: 7px; }
.cap { font-size: 11.5px; font-weight: 400; color: #545b64; letter-spacing: .28px; }
.visuals > .cap { margin: 12px 13px 0; }
.vtype { margin: 6px 13px 0; display: flex; align-items: center; font-size: 16px; letter-spacing: -.4px; }
.vtype span { flex: 1; }
.vtype > .ico { margin-right: 5px; color: #545b64; }
.thumb { width: 56px; height: 39px; border: 1px solid #c4c4c4; border-radius: 4px; display: grid; place-items: center; margin-right: 9px; }
.g { fill: none; stroke: #0b2a3a; stroke-width: 1.2; }
.wells { margin-top: 17px; border-top: 1px solid #dcdcdc; padding: 15px 13px; }
.wells .cap { letter-spacing: .1px; }
.pill { width: 239px; height: 28px; border-radius: 14px; border: 1px solid; display: flex; align-items: center; justify-content: space-between; padding: 0 11px 0 9px; margin: 8px 0 27px; letter-spacing: -.2px; }
.blue { border-color: #1f86bf; background: #f2faff; }
.orange { border-color: #c97a00; background: #fffbf4; }

.sheet { width: 1122px; border-right: 1px solid #dcdcdc; display: flex; flex-direction: column; }
.sheettabs { height: 42px; flex: none; border-bottom: 1px solid #dcdcdc; display: flex; align-items: center; padding: 6px 0 0 6px; color: #687078; gap: 10px; }
.sheettab { width: 91px; height: 37px; border: 1px solid #dcdcdc; border-bottom: 0; background: #f5f5f5; color: #16191f; font-weight: 700; font-size: 15px; letter-spacing: -.6px; display: flex; align-items: center; justify-content: space-between; padding: 0 3px 0 11px; margin-bottom: -1px; }
.sheettab .ico, .sheettabs > .ico { color: #879596; stroke-width: 1.4; }
.sheettabs > .ico { margin-top: -2px; }
.canvas { flex: 1; min-height: 0; position: relative; background: #f5f5f5; }
.board { padding-left: 9px; width: 1107px; }
.toprow { display: flex; gap: 10px; height: 30px; }
.card { width: 886px; background: #fff; border: 2px solid #e2e2e2; border-top: 0; text-align: center; font-size: 16px; font-weight: 400; letter-spacing: -.33px; padding-right: 105px; }
.card2 { flex: 1; background: #fff; border-left: 2px solid #e2e2e2; }
.visual { position: relative; margin-top: 10px; width: 887px; height: 586px; background: #fff; border: 2px solid #232323; padding: 0 9px; }
.h { position: absolute; width: 7px; height: 7px; background: #fff; border: 1px solid #000; }
.tl, .tc, .tr { top: -4px; } .bl, .bc, .br { bottom: -4px; } .ml, .mr { top: 287px; }
.tl, .ml, .bl { left: -4px; } .tr, .mr, .br { right: -4px; } .tc, .bc { left: 438px; }
.vtitle { height: 49px; font-size: 16px; font-weight: 400; letter-spacing: -.24px; padding-top: 16px; }
.mapbox { position: relative; width: 864px; height: 523px; background: #cfd3d4; }
.land { fill: #f3f3f3; }
.land .water { fill: #cfd3d4; }
.land .border { fill: none; stroke: #dedede; stroke-width: 4; }
.st { stroke: #990000; stroke-width: 3.5; stroke-linejoin: round; }
g.st { stroke-width: 1.2; }
.red { fill: #f00; }
.lines { fill: none; }
.isle { fill: none; stroke: #990000; stroke-width: 6; stroke-linejoin: round; }
.dense { fill: #990000; }
.green { fill: #0f0; stroke: #009900; }
.greenisle { fill: none; stroke: #009900; stroke-width: 5; }
.gold { fill: #ffa500; stroke: #996300; stroke-width: 4; }
.attrib { position: absolute; left: 0; bottom: 0; width: 262px; height: 22px; background: #e7e9ea; border-radius: 0 4px 0 0; padding-left: 6px; font: 400 9px/21px "Liberation Sans", Arial, sans-serif; letter-spacing: 0; color: #222; }
.attrib a { color: #0073bb; }
.mapctl { position: absolute; left: 822px; top: 413px; width: 37px; height: 105px; background: #ececec; padding: 2px; display: grid; grid-template-rows: 33px 33px 31px; gap: 2px; }
.mapctl span { background: #fff; display: grid; place-items: center; color: #222; }
.vtools { position: absolute; left: 759px; top: -16px; width: 118px; height: 28px; border: 1.500px solid #666; border-radius: 4px; background: #fff; box-shadow: 0 3px 5px #0004; display: flex; align-items: center; color: #545b64; padding-left: 4px; gap: 7px; }
.vtools .ico { stroke-width: 1.5; }
.vtools .more { margin-left: 9px; }
.cvbar { position: absolute; right: 0; top: 0; width: 14px; height: 733px; background: #f5f5f5; display: flex; flex-direction: column; align-items: center; justify-content: flex-end; fill: #a3a3a3; padding: 0 0 7px; gap: 8px; }
.cvbar div { width: 10px; height: 271px; background: #a3a3a3; }
.cvbar svg:first-child { margin-bottom: auto; margin-top: 6px; }
.chbar { position: absolute; left: 4px; bottom: 0; width: 1098px; height: 8px; display: flex; align-items: center; gap: 6px; fill: #a3a3a3; }
.chbar div { width: 667px; height: 8px; background: #a3a3a3; }
.chbar svg:last-child { margin-left: auto; }
.props { flex: 1; }
.props .ptitle { padding: 0 14px 0 17px; gap: 7px; letter-spacing: -.45px; }

.dialog { position: absolute; left: 1427px; top: 300px; width: 450px; height: 228px; background: #fff; border-radius: 5px; box-shadow: 0 5px 14px #0006; overflow: hidden; }
.dhead { height: 41px; background: linear-gradient(100deg, #f1e8fb 0, #e8f3fe 30%, #f5fefe 70%, #f8ffff); display: flex; align-items: center; gap: 5px; padding: 0 17px 0 13px; font-size: 16px; letter-spacing: -.2px; }
.dhead span { flex: 1; }
.dhead .ico { color: #545b64; }
.question { display: flex; align-items: center; gap: 8px; padding: 15px 13px 9px; color: #16191f; letter-spacing: -.29px; }
.area { margin: 3px 13px 0; width: 423px; height: 63px; border: 1px solid #879596; border-radius: 4px; padding: 2px 8px; font-weight: 400; color: #687078; letter-spacing: -.28px; }
.max { margin: 1px 13px 0; font-size: 12px; font-weight: 400; letter-spacing: .37px; color: #687078; }
.dfoot { display: flex; justify-content: space-between; align-items: center; padding: 15px 14px 0 13px; letter-spacing: -.32px; }
.dfoot u { text-underline-offset: 2px; }
.apply { width: 101px; height: 32px; border-radius: 4px; background: #19719a; color: #fff; font-size: 16px; font-weight: 600; letter-spacing: -.05px; display: grid; place-items: center; box-shadow: 0 1px 3px #0006; }
.ink { position: absolute; left: 0; top: 0; fill: none; stroke: #ffab09; stroke-width: 3.6; stroke-linecap: round; stroke-linejoin: round; pointer-events: none; }
```
